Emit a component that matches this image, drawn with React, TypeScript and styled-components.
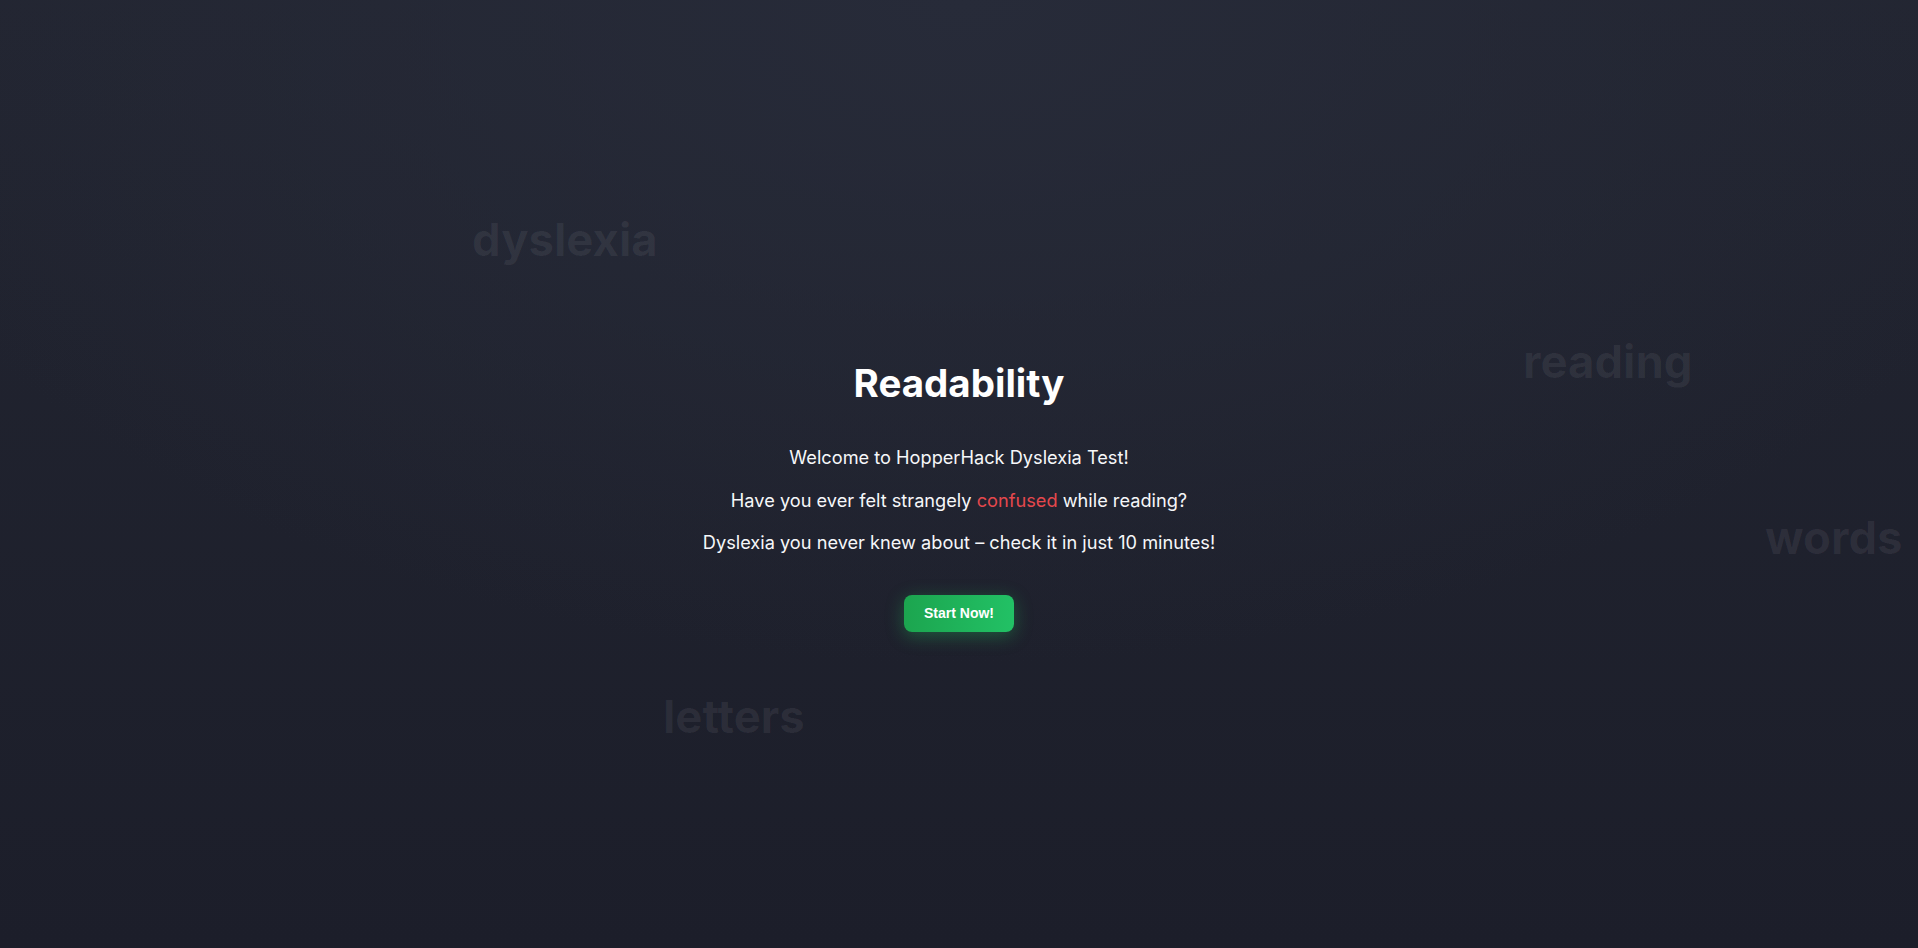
import styled, { createGlobalStyle } from "styled-components";

const GlobalStyle = createGlobalStyle`
  html, body {
    margin: 0;
    padding: 0;
    height: 100%;
  }
  body {
    font-family: Inter, "Noto Sans", sans-serif;
    background: #1e202d;
    color: #f4f4f6;
  }
`;

const Page = styled.main`
  position: relative;
  min-height: 100vh;
  overflow: hidden;
  display: flex;
  align-items: center;
  justify-content: center;
  background:
    radial-gradient(ellipse 60% 70% at 50% 0%, #272b39 0%, rgba(39, 43, 57, 0) 100%),
    linear-gradient(180deg, #222531 0%, #1c1e2a 100%);
`;

const FloatingWord = styled.span<{ $x: number; $y: number; $size: number }>`
  position: absolute;
  left: ${(p) => p.$x}px;
  top: ${(p) => p.$y}px;
  font-size: ${(p) => p.$size}px;
  font-weight: 700;
  color: rgba(255, 255, 255, 0.065);
  user-select: none;
  pointer-events: none;
  white-space: nowrap;
`;

const Content = styled.section`
  position: relative;
  z-index: 1;
  display: flex;
  flex-direction: column;
  align-items: center;
  text-align: center;
  padding-top: 44px;
`;

const Title = styled.h1`
  margin: 0 0 30px;
  font-size: 38.5px;
  line-height: 1.2;
  font-weight: 700;
  color: #ffffff;
`;

const Line = styled.p`
  margin: 0;
  font-size: 18.2px;
  line-height: 42.5px;
  font-weight: 400;
  color: #f6f7f9;
`;

const Highlight = styled.span`
  color: #e5484d;
`;

const StartButton = styled.button`
  margin-top: 31px;
  padding: 0 20px;
  height: 37px;
  border: none;
  border-radius: 8px;
  background: linear-gradient(90deg, #1ca54f 0%, #22c165 100%);
  color: #ffffff;
  font-family: "Liberation Sans", Arial, sans-serif;
  font-size: 14px;
  font-weight: 700;
  cursor: pointer;
  box-shadow: 0 4px 18px rgba(34, 197, 94, 0.35);
`;

const words = [
  { text: "dyslexia", x: 472, y: 212, size: 45.5 },
  { text: "reading", x: 1523, y: 334, size: 45.5 },
  { text: "words", x: 1765, y: 510, size: 45.5 },
  { text: "letters", x: 663, y: 689, size: 45.5 },
];

export default function App() {
  return (
    <>
      <GlobalStyle />
      <Page>
        {words.map((w) => (
          <FloatingWord key={w.text} $x={w.x} $y={w.y} $size={w.size}>
            {w.text}
          </FloatingWord>
        ))}
        <Content>
          <Title>Readability</Title>
          <Line>Welcome to HopperHack Dyslexia Test!</Line>
          <Line>
            Have you ever felt strangely <Highlight>confused</Highlight> while
            reading?
          </Line>
          <Line>Dyslexia you never knew about – check it in just 10 minutes!</Line>
          <StartButton type="button">Start Now!</StartButton>
        </Content>
      </Page>
    </>
  );
}
